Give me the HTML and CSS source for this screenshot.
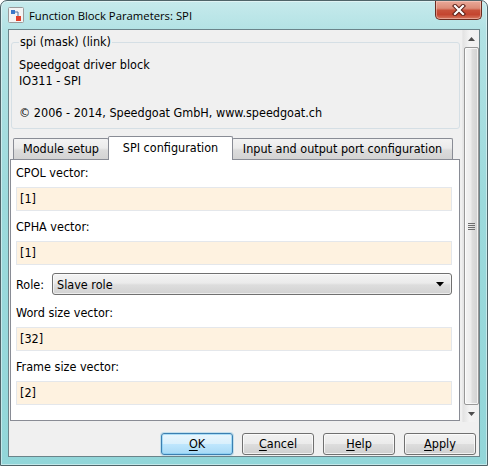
FILE: index.html
```html
<!DOCTYPE html>
<html>
<head>
<meta charset="utf-8">
<title>Function Block Parameters: SPI</title>
<link rel="stylesheet" href="styles.css">
</head>
<body>
<div class="window">
  <div class="titlebar">
    <svg class="app-icon" width="16" height="16" viewBox="0 0 16 16">
      <rect x="0.5" y="0.5" width="15" height="15" rx="1" fill="#f4f4f4" stroke="#9a9a9a"/>
      <rect x="3" y="3" width="4" height="4" fill="#3a78c8"/>
      <path d="M7 5 H10 V9" fill="none" stroke="#4a6fa0" stroke-width="1"/>
      <rect x="8" y="9" width="5" height="5" fill="#e0402a"/>
    </svg>
    <span class="title">Function Block Parameters: SPI</span>
    <div class="close">
      <svg width="16" height="12" viewBox="0 0 16 12">
        <path d="M4 2 L12 10 M12 2 L4 10" stroke="#5b1f16" stroke-width="4.2" stroke-linecap="square"/>
        <path d="M4 2 L12 10 M12 2 L4 10" stroke="#ffffff" stroke-width="2.2" stroke-linecap="square"/>
      </svg>
    </div>
  </div>
  <div class="client">
    <div class="main">
      <div class="content">
        <fieldset class="group">
          <legend>spi (mask) (link)</legend>
          <p class="desc">Speedgoat driver block<br>IO311 - SPI<br><br>© 2006 - 2014, Speedgoat GmbH, www.speedgoat.ch</p>
        </fieldset>
        <div class="tabs">
          <div class="tab tab-module">Module setup</div>
          <div class="tab tab-spi active">SPI configuration</div>
          <div class="tab tab-io">Input and output port configuration</div>
        </div>
        <div class="panel">
          <div class="label">CPOL vector:</div>
          <div class="field">[1]</div>
          <div class="label">CPHA vector:</div>
          <div class="field">[1]</div>
          <div class="role-row">
            <span class="role-label">Role:</span>
            <div class="select">
              <span>Slave role</span>
              <svg class="caret" width="8" height="5" viewBox="0 0 8 5"><path d="M0 0 H8 L4 4.5 Z" fill="#000"/></svg>
            </div>
          </div>
          <div class="label">Word size vector:</div>
          <div class="field">[32]</div>
          <div class="label">Frame size vector:</div>
          <div class="field">[2]</div>
        </div>
      </div>
      <div class="scrollbar">
        <div class="sb-btn"><svg width="7" height="4" viewBox="0 0 7 4"><path d="M0 4 L3.5 0 L7 4 Z" fill="#4d4d4d"/></svg></div>
        <div class="sb-track">
          <div class="sb-thumb">
            <svg width="7" height="7" viewBox="0 0 7 7"><path d="M0 0.5 H7 M0 2.5 H7 M0 4.5 H7 M0 6.5 H7" stroke="#6e6e6e" stroke-width="1"/></svg>
          </div>
        </div>
        <div class="sb-btn"><svg width="7" height="4" viewBox="0 0 7 4"><path d="M0 0 L7 0 L3.5 4 Z" fill="#4d4d4d"/></svg></div>
      </div>
    </div>
    <div class="buttons">
      <button class="btn default"><u>O</u>K</button>
      <button class="btn"><u>C</u>ancel</button>
      <button class="btn"><u>H</u>elp</button>
      <button class="btn"><u>A</u>pply</button>
    </div>
  </div>
</div>
</body>
</html>
```
FILE: styles.css
```css
html, body {
  margin: 0;
  padding: 0;
  background: #ffffff;
}

.window {
  box-sizing: border-box;
  width: 488px;
  height: 466px;
  border: 1px solid #4f6469;
  border-radius: 7px 7px 0 0;
  background: linear-gradient(180deg, #c6eaec 0px, #b2e2e4 30px, #9cdadc 200px, #92d6d9 466px);
  box-shadow: inset 0 0 0 1px rgba(255, 255, 255, 0.45);
  display: flex;
  flex-direction: column;
  font-family: "DejaVu Sans Condensed", "DejaVu Sans", sans-serif;
  font-size: 12.5px;
  color: #000;
}

.titlebar {
  height: 28px;
  display: flex;
  align-items: flex-start;
  flex-shrink: 0;
}

.app-icon {
  margin: 6px 0 0 7px;
  flex-shrink: 0;
}

.title {
  margin: 7px 0 0 5px;
  font-family: "Open Sans", "Noto Sans", sans-serif;
  font-size: 11.3px;
  line-height: 16px;
  color: #000;
}

.close {
  margin-left: auto;
  margin-right: 5px;
  width: 47px;
  height: 19px;
  box-sizing: border-box;
  border: 1px solid #6b2c20;
  border-top: none;
  border-radius: 0 0 5px 5px;
  background: linear-gradient(180deg, #e9a999 0%, #dc8c78 40%, #c8513a 52%, #c4452f 75%, #d67860 100%);
  box-shadow: inset 0 0 0 1px rgba(255, 220, 210, 0.45);
  display: flex;
  align-items: center;
  justify-content: center;
}

.client {
  flex: 1;
  margin: 0 7px 8px;
  border: 1px solid #6b848a;
  background: #f0f0f0;
  display: flex;
  flex-direction: column;
  min-height: 0;
}

.main {
  height: 392px;
  display: flex;
  flex-shrink: 0;
}

.content {
  flex: 1;
  display: flex;
  flex-direction: column;
  min-width: 0;
}

/* group box */
.group {
  margin: 4px 2px 0 2px;
  padding: 7px 7px 7px 7px;
  border: 1px solid #d5dfe5;
  border-radius: 3px;
  min-width: 0;
}

.group legend {
  padding: 0 1px;
  line-height: 16px;
}

.desc {
  margin: 0;
  line-height: 16px;
  white-space: nowrap;
}

/* tabs */
.tabs {
  display: flex;
  align-items: flex-end;
  height: 22px;
  margin: 8px 0 0 4px;
  position: relative;
  z-index: 1;
}

.tab {
  box-sizing: border-box;
  height: 21px;
  border: 1px solid #898c95;
  border-bottom: none;
  border-radius: 2px 2px 0 0;
  background: linear-gradient(180deg, #f3f3f3 0%, #ebebeb 45%, #dcdcdc 55%, #d3d3d3 100%);
  text-align: center;
  line-height: 20px;
  white-space: nowrap;
}

.tab-module { width: 96px; }
.tab-spi { width: 125px; margin-left: -1px; }
.tab-io { width: 221px; margin-left: -1px; }

.tab.active {
  height: 24px;
  margin-bottom: -1px;
  background: #ffffff;
  line-height: 21px;
  position: relative;
  z-index: 2;
}

/* panel */
.panel {
  flex: 1;
  margin: 0 2px 1px 1px;
  border: 1px solid #898c95;
  background: #ffffff;
  padding: 5px 7px 0 5px;
  display: flex;
  flex-direction: column;
}

.label {
  line-height: 16px;
  height: 16px;
  white-space: nowrap;
}

.field {
  box-sizing: border-box;
  height: 24px;
  margin: 6px 0 8px;
  padding-left: 3px;
  border: 1px solid #e4e7eb;
  background: #fef2e0;
  line-height: 22px;
}

.role-row {
  display: flex;
  align-items: center;
  margin-bottom: 10px;
}

.role-label {
  width: 36px;
  flex-shrink: 0;
}

.select {
  flex: 1;
  box-sizing: border-box;
  height: 22px;
  border: 1px solid #707070;
  border-radius: 3px;
  background: linear-gradient(180deg, #f4f4f4 0%, #ebebeb 45%, #dddddd 55%, #d2d2d2 100%);
  box-shadow: inset 0 0 0 1px rgba(255, 255, 255, 0.6);
  display: flex;
  align-items: center;
  padding: 0 7px 0 4px;
}

.select span {
  flex: 1;
}

/* scrollbar */
.scrollbar {
  width: 16px;
  flex-shrink: 0;
  display: flex;
  flex-direction: column;
  background: linear-gradient(90deg, #e3e3e3 0%, #f3f3f3 40%, #f0f0f0 100%);
  border-left: 1px solid #e8e8e8;
}

.sb-btn {
  height: 17px;
  display: flex;
  align-items: center;
  justify-content: center;
  flex-shrink: 0;
}

.sb-track {
  flex: 1;
  display: flex;
  padding: 0 0 0 1px;
}

.sb-thumb {
  flex: 1;
  box-sizing: border-box;
  border: 1px solid #989898;
  border-radius: 2px;
  background: linear-gradient(90deg, #f4f4f4 0%, #ececec 45%, #dedede 55%, #d2d2d2 100%);
  box-shadow: inset 0 0 0 1px rgba(255, 255, 255, 0.7);
  display: flex;
  align-items: center;
  justify-content: center;
}

/* buttons */
.buttons {
  flex: 1;
  display: flex;
  justify-content: flex-end;
  align-items: flex-start;
  gap: 9px;
  padding: 11px 3px 0 0;
}

.btn {
  box-sizing: border-box;
  width: 72px;
  height: 22px;
  padding: 0;
  border: 1px solid #707070;
  border-radius: 3px;
  background: linear-gradient(180deg, #f2f2f2 0%, #ebebeb 48%, #dddddd 52%, #cfcfcf 100%);
  box-shadow: inset 0 0 0 1px rgba(255, 255, 255, 0.7);
  font-family: "DejaVu Sans Condensed", "DejaVu Sans", sans-serif;
  font-size: 12.5px;
  color: #000;
  line-height: 20px;
}

.btn u {
  text-decoration-thickness: 1px;
  text-underline-offset: 2px;
}

.btn.default {
  border-color: #3c7fb1;
  background: linear-gradient(180deg, #eaf6fd 0%, #d9f0fc 48%, #bee6fd 52%, #a7d9f5 100%);
  box-shadow: inset 0 0 0 1px rgba(120, 200, 240, 0.55), 0 0 0 1px rgba(60, 170, 220, 0.25);
}
```
